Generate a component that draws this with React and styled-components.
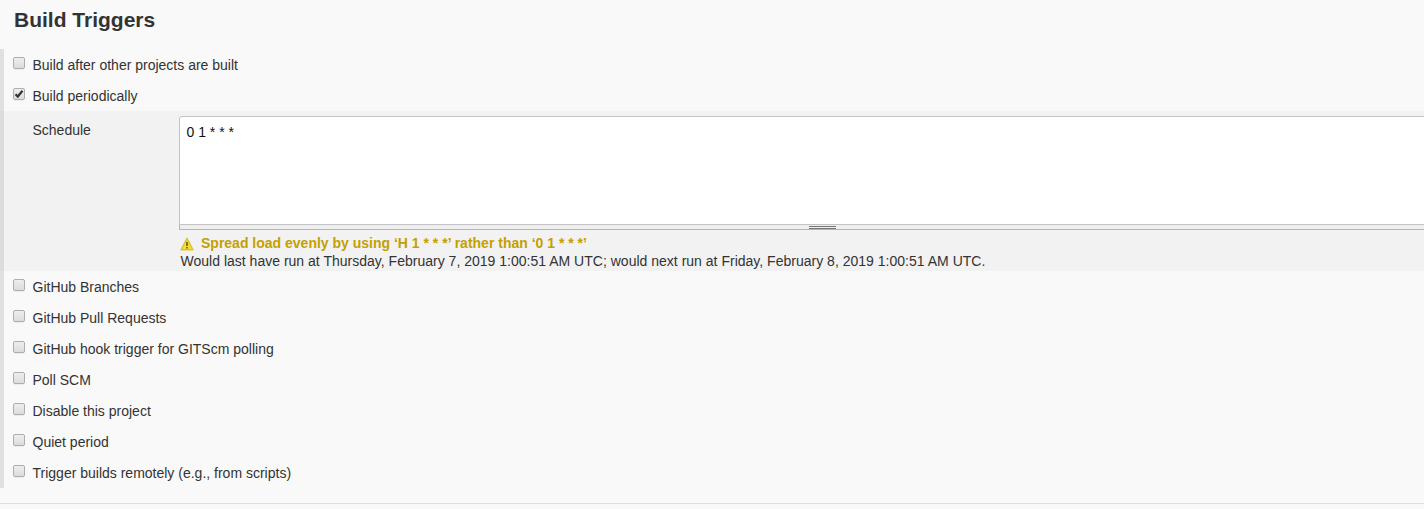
import React from 'react';
import styled, { createGlobalStyle } from 'styled-components';

const GlobalStyle = createGlobalStyle`
  * { box-sizing: border-box; }
  body {
    margin: 0;
    background: #f9f9f9;
    color: #333;
    font: 14px/18px "Liberation Sans", Arial, sans-serif;
    overflow: hidden;
  }
`;

const Page = styled.main`
  height: 509px;
  overflow: hidden;
`;

const Heading = styled.h2`
  margin: 0;
  height: 49px;
  padding: 8px 0 0 14px;
  font-size: 21px;
  line-height: 24px;
  font-weight: bold;
`;

const Triggers = styled.section`
  border-left: 4px solid #e0e0e0;
  height: 439px;
`;

const OptionRow = styled.label`
  display: flex;
  height: 31px;
  padding: 8px 0 0 9px;
`;

const CheckBox = styled.span`
  flex: none;
  width: 12px;
  height: 12px;
  margin-right: 7.5px;
  border: 1px solid #adadad;
  border-radius: 2px;
  background: linear-gradient(#eee, #dcdcdc);
  box-shadow: 0 1px 0 #ececec;
`;

const CheckMark = styled.svg`
  display: block;
  width: 10px;
  height: 10px;
`;

const OptionText = styled.span`
  margin-top: -1px;
  white-space: nowrap;
`;

const SchedulePanel = styled.div`
  display: flex;
  height: 160px;
  margin-left: -4px;
  padding-top: 5px;
  background: #f2f2f2;
  border-left: 4px solid #dcdcdc;
`;

const FieldName = styled.div`
  width: 175px;
  padding: 5px 0 0 28.5px;
`;

const Field = styled.div`
  flex: 1;
  min-width: 0;
`;

const Editor = styled.textarea`
  display: block;
  width: calc(100% + 8px);
  height: 109px;
  margin: 0;
  padding: 6px 6px 6px 6.5px;
  border: 1px solid #c3c3c3;
  border-radius: 3px 0 0 0;
  outline: none;
  resize: none;
  background: #fff;
  color: #111;
  font: inherit;
`;

const ResizeBar = styled.div`
  display: flex;
  justify-content: center;
  width: calc(100% + 8px);
  height: 5px;
  border: 1px solid #b5b5b5;
  border-top: 0;
  background: #eee;
`;

const Grip = styled.div`
  width: 27px;
  height: 3px;
  margin: 1px 0 0 33px;
  border: solid #777;
  border-width: 1px 0;
`;

const Warning = styled.div`
  display: flex;
  height: 18px;
  margin-top: 5px;
  padding-left: 1px;
  color: #c4a000;
  font-weight: bold;
  line-height: 17px;
  white-space: nowrap;
`;

const WarningIcon = styled.svg`
  flex: none;
  width: 14px;
  height: 14px;
  margin: 2px 7px 0 0;
`;

const RunTimes = styled.div`
  padding-left: 1.5px;
  line-height: 17px;
  letter-spacing: 0.01px;
  white-space: nowrap;
`;

const Divider = styled.hr`
  height: 1px;
  margin: 15px 0 0;
  border: 0;
  background: #ddd;
`;

function Option({ children, checked }) {
  return (
    <OptionRow>
      <CheckBox>
        {checked && (
          <CheckMark viewBox="0 0 10 10">
            <path d="M1.5 5.2 3.8 7.5 8.5 1.8" fill="none" stroke="#333" strokeWidth="2.2" />
          </CheckMark>
        )}
      </CheckBox>
      <OptionText>{children}</OptionText>
    </OptionRow>
  );
}

export default function App() {
  return (
    <Page>
      <GlobalStyle />
      <Heading>Build Triggers</Heading>
      <Triggers>
        <Option>Build after other projects are built</Option>
        <Option checked>Build periodically</Option>
        <SchedulePanel>
          <FieldName>Schedule</FieldName>
          <Field>
            <Editor defaultValue="0 1 * * *" spellCheck={false} />
            <ResizeBar><Grip /></ResizeBar>
            <Warning>
              <WarningIcon viewBox="0 0 14 14">
                <path d="M7 1.2 13 12.8H1Z" fill="#f5dc3c" stroke="#dcc32c" strokeWidth="1.4" strokeLinejoin="round" />
                <path d="M7 5v4M7 10v1.5" stroke="#57501c" strokeWidth="1.5" />
              </WarningIcon>
              <span>Spread load evenly by using ‘H 1 * * *’ rather than ‘0 1 * * *’</span>
            </Warning>
            <RunTimes>
              Would last have run at Thursday, February 7, 2019 1:00:51 AM UTC; would next run at Friday, February 8, 2019 1:00:51 AM UTC.
            </RunTimes>
          </Field>
        </SchedulePanel>
        <Option>GitHub Branches</Option>
        <Option>GitHub Pull Requests</Option>
        <Option>GitHub hook trigger for GITScm polling</Option>
        <Option>Poll SCM</Option>
        <Option>Disable this project</Option>
        <Option>Quiet period</Option>
        <Option>Trigger builds remotely (e.g., from scripts)</Option>
      </Triggers>
      <Divider />
    </Page>
  );
}
